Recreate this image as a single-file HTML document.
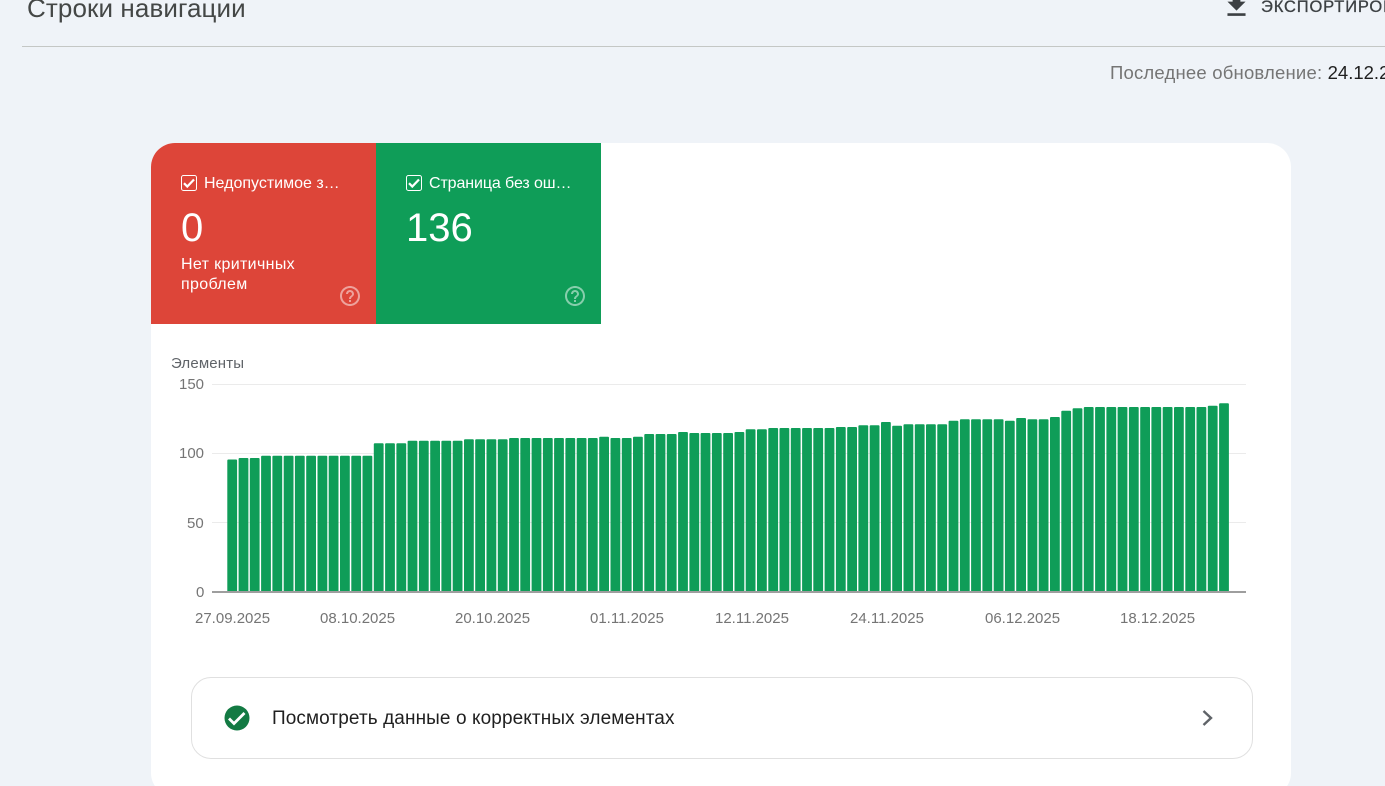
<!DOCTYPE html>
<html lang="ru"><head><meta charset="utf-8"><title>Строки навигации</title>
<style>
html,body{margin:0;padding:0;width:1385px;height:786px;overflow:hidden;background:#eff3f8}
body{position:relative;font-family:"Liberation Sans",Arial,sans-serif}
.a{position:absolute;white-space:nowrap}
.t{color:#757575;font-size:15px;line-height:16px}
.w{color:#fff}
svg{position:absolute;display:block}
</style></head><body>
<div class="a" style="left:27px;top:-6px;font-size:26px;line-height:28px;color:#444746;letter-spacing:.1px">Строки навигации</div>
<svg style="left:1220.6px;top:-10px" width="31" height="31" viewBox="0 0 24 24"><path fill="#3c4043" d="M19 9h-4V3H9v6H5l7 7 7-7zM5 18v2h14v-2H5z"/></svg>
<div class="a" style="left:1261px;top:-1px;font-size:16.5px;line-height:16px;color:#3c4043;letter-spacing:.85px;-webkit-text-stroke:.3px #3c4043">ЭКСПОРТИРОВАТЬ</div>
<div class="a" style="left:22px;top:46px;width:1363px;height:1px;background:#c4c7c5"></div>
<div class="a" style="left:1110px;top:64px;font-size:18.5px;line-height:18px;color:#757575;letter-spacing:.2px">Последнее обновление: <span style="color:#1f1f1f;letter-spacing:0">24.12.2025</span></div>

<div class="a" style="left:151px;top:143px;width:1140px;height:654px;background:#fff;border-radius:24px"></div>
<div class="a" style="left:151px;top:143px;width:225px;height:181px;background:#dd4539;border-top-left-radius:24px"></div>
<div class="a" style="left:376px;top:143px;width:225px;height:181px;background:#0f9d58"></div>

<svg style="left:181px;top:175px" width="16" height="16" viewBox="0 0 16 16"><rect x=".5" y=".5" width="15" height="15" rx="2" fill="none" stroke="#fff"/><path d="M3 8.2l3.3 3.3 6.7-7" fill="none" stroke="#fff" stroke-width="2.2"/></svg>
<div class="a w" style="left:204px;top:175px;font-size:16px;line-height:18px">Недопустимое з…</div>
<div class="a w" style="left:181px;top:205px;font-size:40px;line-height:46px">0</div>
<div class="a w" style="left:181px;top:255px;font-size:16px;line-height:20px;letter-spacing:.35px">Нет критичных<br>проблем</div>
<svg style="left:338px;top:284px" width="24" height="24" viewBox="0 0 24 24"><path fill="#fff" fill-opacity=".5" d="M11 18h2v-2h-2v2zm1-16C6.48 2 2 6.48 2 12s4.48 10 10 10 10-4.48 10-10S17.52 2 12 2zm0 18c-4.41 0-8-3.59-8-8s3.59-8 8-8 8 3.59 8 8-3.59 8-8 8zm0-14c-2.21 0-4 1.79-4 4h2c0-1.1.9-2 2-2s2 .9 2 2c0 2-3 1.75-3 5h2c0-2.25 3-2.5 3-5 0-2.21-1.79-4-4-4z"/></svg>

<svg style="left:406px;top:175px" width="16" height="16" viewBox="0 0 16 16"><rect x=".5" y=".5" width="15" height="15" rx="2" fill="none" stroke="#fff"/><path d="M3 8.2l3.3 3.3 6.7-7" fill="none" stroke="#fff" stroke-width="2.2"/></svg>
<div class="a w" style="left:429px;top:175px;font-size:16px;line-height:18px;letter-spacing:-.1px">Страница без ош…</div>
<div class="a w" style="left:406px;top:205px;font-size:40px;line-height:46px">136</div>
<svg style="left:563px;top:284px" width="24" height="24" viewBox="0 0 24 24"><path fill="#fff" fill-opacity=".5" d="M11 18h2v-2h-2v2zm1-16C6.48 2 2 6.48 2 12s4.48 10 10 10 10-4.48 10-10S17.52 2 12 2zm0 18c-4.41 0-8-3.59-8-8s3.59-8 8-8 8 3.59 8 8-3.59 8-8 8zm0-14c-2.21 0-4 1.79-4 4h2c0-1.1.9-2 2-2s2 .9 2 2c0 2-3 1.75-3 5h2c0-2.25 3-2.5 3-5 0-2.21-1.79-4-4-4z"/></svg>

<div class="a" style="left:171px;top:356px;font-size:15px;line-height:16px;color:#5f6368;letter-spacing:.15px">Элементы</div>
<div class="a t" style="left:179px;top:377px">150</div>
<div class="a t" style="left:179px;top:446px">100</div>
<div class="a t" style="left:187px;top:516px">50</div>
<div class="a t" style="left:196px;top:585px">0</div>
<div class="a" style="left:212px;top:384px;width:1034px;height:1px;background:#ebebeb"></div>
<div class="a" style="left:212px;top:453px;width:1034px;height:1px;background:#ebebeb"></div>
<div class="a" style="left:212px;top:522px;width:1034px;height:1px;background:#ebebeb"></div>

<svg style="left:0;top:0" width="1385" height="592" viewBox="0 0 1385 592" fill="#0f9d58">
<rect x="227.3" y="459.5" width="9.8" height="200" rx="1"/><rect x="238.6" y="458" width="9.8" height="200" rx="1"/><rect x="249.8" y="458" width="9.8" height="200" rx="1"/><rect x="261.1" y="455.7" width="9.8" height="200" rx="1"/><rect x="272.4" y="455.7" width="9.8" height="200" rx="1"/><rect x="283.7" y="455.7" width="9.8" height="200" rx="1"/><rect x="294.9" y="455.7" width="9.8" height="200" rx="1"/><rect x="306.2" y="455.7" width="9.8" height="200" rx="1"/><rect x="317.5" y="455.7" width="9.8" height="200" rx="1"/><rect x="328.7" y="455.7" width="9.8" height="200" rx="1"/>
<rect x="340" y="455.7" width="9.8" height="200" rx="1"/><rect x="351.3" y="455.7" width="9.8" height="200" rx="1"/><rect x="362.5" y="455.7" width="9.8" height="200" rx="1"/><rect x="373.8" y="443.3" width="9.8" height="200" rx="1"/><rect x="385.1" y="443.3" width="9.8" height="200" rx="1"/><rect x="396.4" y="443.3" width="9.8" height="200" rx="1"/><rect x="407.6" y="440.7" width="9.8" height="200" rx="1"/><rect x="418.9" y="440.7" width="9.8" height="200" rx="1"/><rect x="430.2" y="440.7" width="9.8" height="200" rx="1"/><rect x="441.4" y="440.7" width="9.8" height="200" rx="1"/>
<rect x="452.7" y="440.7" width="9.8" height="200" rx="1"/><rect x="464" y="439.3" width="9.8" height="200" rx="1"/><rect x="475.2" y="439.3" width="9.8" height="200" rx="1"/><rect x="486.5" y="439.3" width="9.8" height="200" rx="1"/><rect x="497.8" y="439.3" width="9.8" height="200" rx="1"/><rect x="509.1" y="438" width="9.8" height="200" rx="1"/><rect x="520.3" y="438" width="9.8" height="200" rx="1"/><rect x="531.6" y="438" width="9.8" height="200" rx="1"/><rect x="542.9" y="438" width="9.8" height="200" rx="1"/><rect x="554.1" y="438" width="9.8" height="200" rx="1"/>
<rect x="565.4" y="438" width="9.8" height="200" rx="1"/><rect x="576.7" y="438" width="9.8" height="200" rx="1"/><rect x="587.9" y="438" width="9.8" height="200" rx="1"/><rect x="599.2" y="436.7" width="9.8" height="200" rx="1"/><rect x="610.5" y="438" width="9.8" height="200" rx="1"/><rect x="621.8" y="438" width="9.8" height="200" rx="1"/><rect x="633" y="436.7" width="9.8" height="200" rx="1"/><rect x="644.3" y="434" width="9.8" height="200" rx="1"/><rect x="655.6" y="434" width="9.8" height="200" rx="1"/><rect x="666.8" y="434" width="9.8" height="200" rx="1"/>
<rect x="678.1" y="432" width="9.8" height="200" rx="1"/><rect x="689.4" y="433" width="9.8" height="200" rx="1"/><rect x="700.6" y="433" width="9.8" height="200" rx="1"/><rect x="711.9" y="433" width="9.8" height="200" rx="1"/><rect x="723.2" y="433" width="9.8" height="200" rx="1"/><rect x="734.5" y="432" width="9.8" height="200" rx="1"/><rect x="745.7" y="429.3" width="9.8" height="200" rx="1"/><rect x="757" y="429.3" width="9.8" height="200" rx="1"/><rect x="768.3" y="428" width="9.8" height="200" rx="1"/><rect x="779.5" y="428" width="9.8" height="200" rx="1"/>
<rect x="790.8" y="428" width="9.8" height="200" rx="1"/><rect x="802.1" y="428" width="9.8" height="200" rx="1"/><rect x="813.3" y="428" width="9.8" height="200" rx="1"/><rect x="824.6" y="428" width="9.8" height="200" rx="1"/><rect x="835.9" y="427" width="9.8" height="200" rx="1"/><rect x="847.2" y="427" width="9.8" height="200" rx="1"/><rect x="858.4" y="425.3" width="9.8" height="200" rx="1"/><rect x="869.7" y="425.3" width="9.8" height="200" rx="1"/><rect x="881" y="422" width="9.8" height="200" rx="1"/><rect x="892.2" y="425.7" width="9.8" height="200" rx="1"/>
<rect x="903.5" y="424.3" width="9.8" height="200" rx="1"/><rect x="914.8" y="424.3" width="9.8" height="200" rx="1"/><rect x="926" y="424.3" width="9.8" height="200" rx="1"/><rect x="937.3" y="424.3" width="9.8" height="200" rx="1"/><rect x="948.6" y="420.7" width="9.8" height="200" rx="1"/><rect x="959.9" y="419.3" width="9.8" height="200" rx="1"/><rect x="971.1" y="419.3" width="9.8" height="200" rx="1"/><rect x="982.4" y="419.3" width="9.8" height="200" rx="1"/><rect x="993.7" y="419.3" width="9.8" height="200" rx="1"/><rect x="1004.9" y="420.7" width="9.8" height="200" rx="1"/>
<rect x="1016.2" y="418" width="9.8" height="200" rx="1"/><rect x="1027.5" y="419.3" width="9.8" height="200" rx="1"/><rect x="1038.7" y="419.3" width="9.8" height="200" rx="1"/><rect x="1050" y="417" width="9.8" height="200" rx="1"/><rect x="1061.3" y="410.7" width="9.8" height="200" rx="1"/><rect x="1072.6" y="408.3" width="9.8" height="200" rx="1"/><rect x="1083.8" y="407" width="9.8" height="200" rx="1"/><rect x="1095.1" y="407" width="9.8" height="200" rx="1"/><rect x="1106.4" y="407" width="9.8" height="200" rx="1"/><rect x="1117.6" y="407" width="9.8" height="200" rx="1"/>
<rect x="1128.9" y="407" width="9.8" height="200" rx="1"/><rect x="1140.2" y="407" width="9.8" height="200" rx="1"/><rect x="1151.4" y="407" width="9.8" height="200" rx="1"/><rect x="1162.7" y="407" width="9.8" height="200" rx="1"/><rect x="1174" y="407" width="9.8" height="200" rx="1"/><rect x="1185.3" y="407" width="9.8" height="200" rx="1"/><rect x="1196.5" y="407" width="9.8" height="200" rx="1"/><rect x="1207.8" y="405.7" width="9.8" height="200" rx="1"/><rect x="1219.1" y="403.3" width="9.8" height="200" rx="1"/>
</svg>
<div class="a" style="left:212px;top:591px;width:1034px;height:2px;background:#9e9e9e"></div>

<div class="a t" style="left:195px;top:611px">27.09.2025</div>
<div class="a t" style="left:320px;top:611px">08.10.2025</div>
<div class="a t" style="left:455px;top:611px">20.10.2025</div>
<div class="a t" style="left:590px;top:611px">01.11.2025</div>
<div class="a t" style="left:715px;top:611px">12.11.2025</div>
<div class="a t" style="left:850px;top:611px">24.11.2025</div>
<div class="a t" style="left:985px;top:611px">06.12.2025</div>
<div class="a t" style="left:1120px;top:611px">18.12.2025</div>

<div class="a" style="left:191px;top:677px;width:1060px;height:80px;border:1px solid #e0e0e0;border-radius:20px"></div>
<svg style="left:224px;top:705px" width="26" height="26" viewBox="0 0 26 26"><circle cx="13" cy="13" r="12.5" fill="#137a43"/><path d="M5 13.5l5 5L20.5 8" fill="none" stroke="#fff" stroke-width="2.8"/></svg>
<div class="a" style="left:272px;top:708px;font-size:19px;line-height:22px;color:#1f1f1f;letter-spacing:.1px">Посмотреть данные о корректных элементах</div>
<svg style="left:1200px;top:708px" width="16" height="20" viewBox="0 0 16 20"><path d="M3.5 3l7.5 7-7.5 7" fill="none" stroke="#5f6368" stroke-width="2.4"/></svg>
</body></html>
